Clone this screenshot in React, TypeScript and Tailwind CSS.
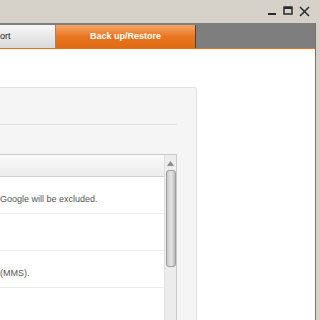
export default function App() {
  return (
    <div className="flex h-[320px] w-[320px] flex-col overflow-hidden bg-[#d6d2ca] font-['Liberation_Sans',Arial,sans-serif]">
      {/* Title bar */}
      <div className="flex h-[23px] shrink-0 items-center justify-end gap-[6px] pr-[10px] pb-[1px]">
        <svg width="9" height="10" viewBox="0 0 9 10">
          <rect x="0" y="7" width="8" height="2" fill="#2b2b2b" />
        </svg>
        <svg width="10" height="10" viewBox="0 0 10 10">
          <rect x="1" y="1" width="8" height="7" fill="none" stroke="#2b2b2b" strokeWidth="1.5" />
          <rect x="1" y="1" width="8" height="2" fill="#2b2b2b" />
        </svg>
        <svg width="11" height="11" viewBox="0 0 11 11">
          <path d="M1 1 L10 10 M10 1 L1 10" stroke="#2b2b2b" strokeWidth="1.5" />
        </svg>
      </div>

      <div className="flex flex-1">
        <div className="flex flex-1 flex-col">
          {/* Tab bar */}
          <div className="flex h-[25px] shrink-0 items-end bg-[#7e7e7e]">
            <div className="flex h-[23px] w-[56px] items-center border-r border-[#8a8a8a] bg-gradient-to-b from-[#f8f8f8] to-[#d9d9d9] text-[9px] text-[#222]">
              ort
            </div>
            <div className="flex h-[23px] w-[140px] items-center justify-center border-r border-[#6b3a12] bg-gradient-to-b from-[#f6a463] via-[#e9761f] to-[#df6a12] text-[9px] font-bold text-white">
              Back up/Restore
            </div>
          </div>
          <div className="h-[1px] bg-[#e8721c]" />

          {/* Content */}
          <div className="flex-1 bg-white pt-[38px]">
            <div className="h-full w-[197px] rounded-tr-[3px] border-r border-t border-[#e2e2e2] bg-[#f5f5f5] pr-[19px]">
              <div className="h-[37px] border-b border-[#dedede]" />
              <div className="mt-[29px] flex h-[200px] border-r border-t border-[#c9c9c9] bg-white">
                <div className="flex-1">
                  <div className="h-[22px] border-b border-[#cfcfcf] bg-gradient-to-b from-[#fafafa] to-[#ececec]" />
                  <div className="flex h-[37px] items-center border-b border-[#ececec] pt-[9px] text-[9px] text-[#555]">
                    Google will be excluded.
                  </div>
                  <div className="h-[37px] border-b border-[#ececec]" />
                  <div className="flex h-[37px] items-center border-b border-[#ececec] pt-[9px] text-[9px] text-[#555]">
                    (MMS).
                  </div>
                  <div className="h-[37px]" />
                </div>
                {/* Scrollbar */}
                <div className="flex w-[12px] flex-col items-center border-l border-[#e0e0e0] bg-[#ececec]">
                  <svg className="mt-[6px]" width="7" height="5" viewBox="0 0 7 5">
                    <path d="M3.5 0 L7 5 L0 5 Z" fill="#8a8a8a" />
                  </svg>
                  <div className="mt-[4px] h-[97px] w-[10px] rounded-[3px] border border-[#9d9d9d] bg-gradient-to-r from-[#c8c8c8] via-[#e6e6e6] to-[#bdbdbd]" />
                </div>
              </div>
            </div>
          </div>
        </div>
        {/* Right frame */}
        <div className="w-[5px] border-l border-[#77726b] bg-[#d6d2ca]" />
      </div>
    </div>
  );
}
